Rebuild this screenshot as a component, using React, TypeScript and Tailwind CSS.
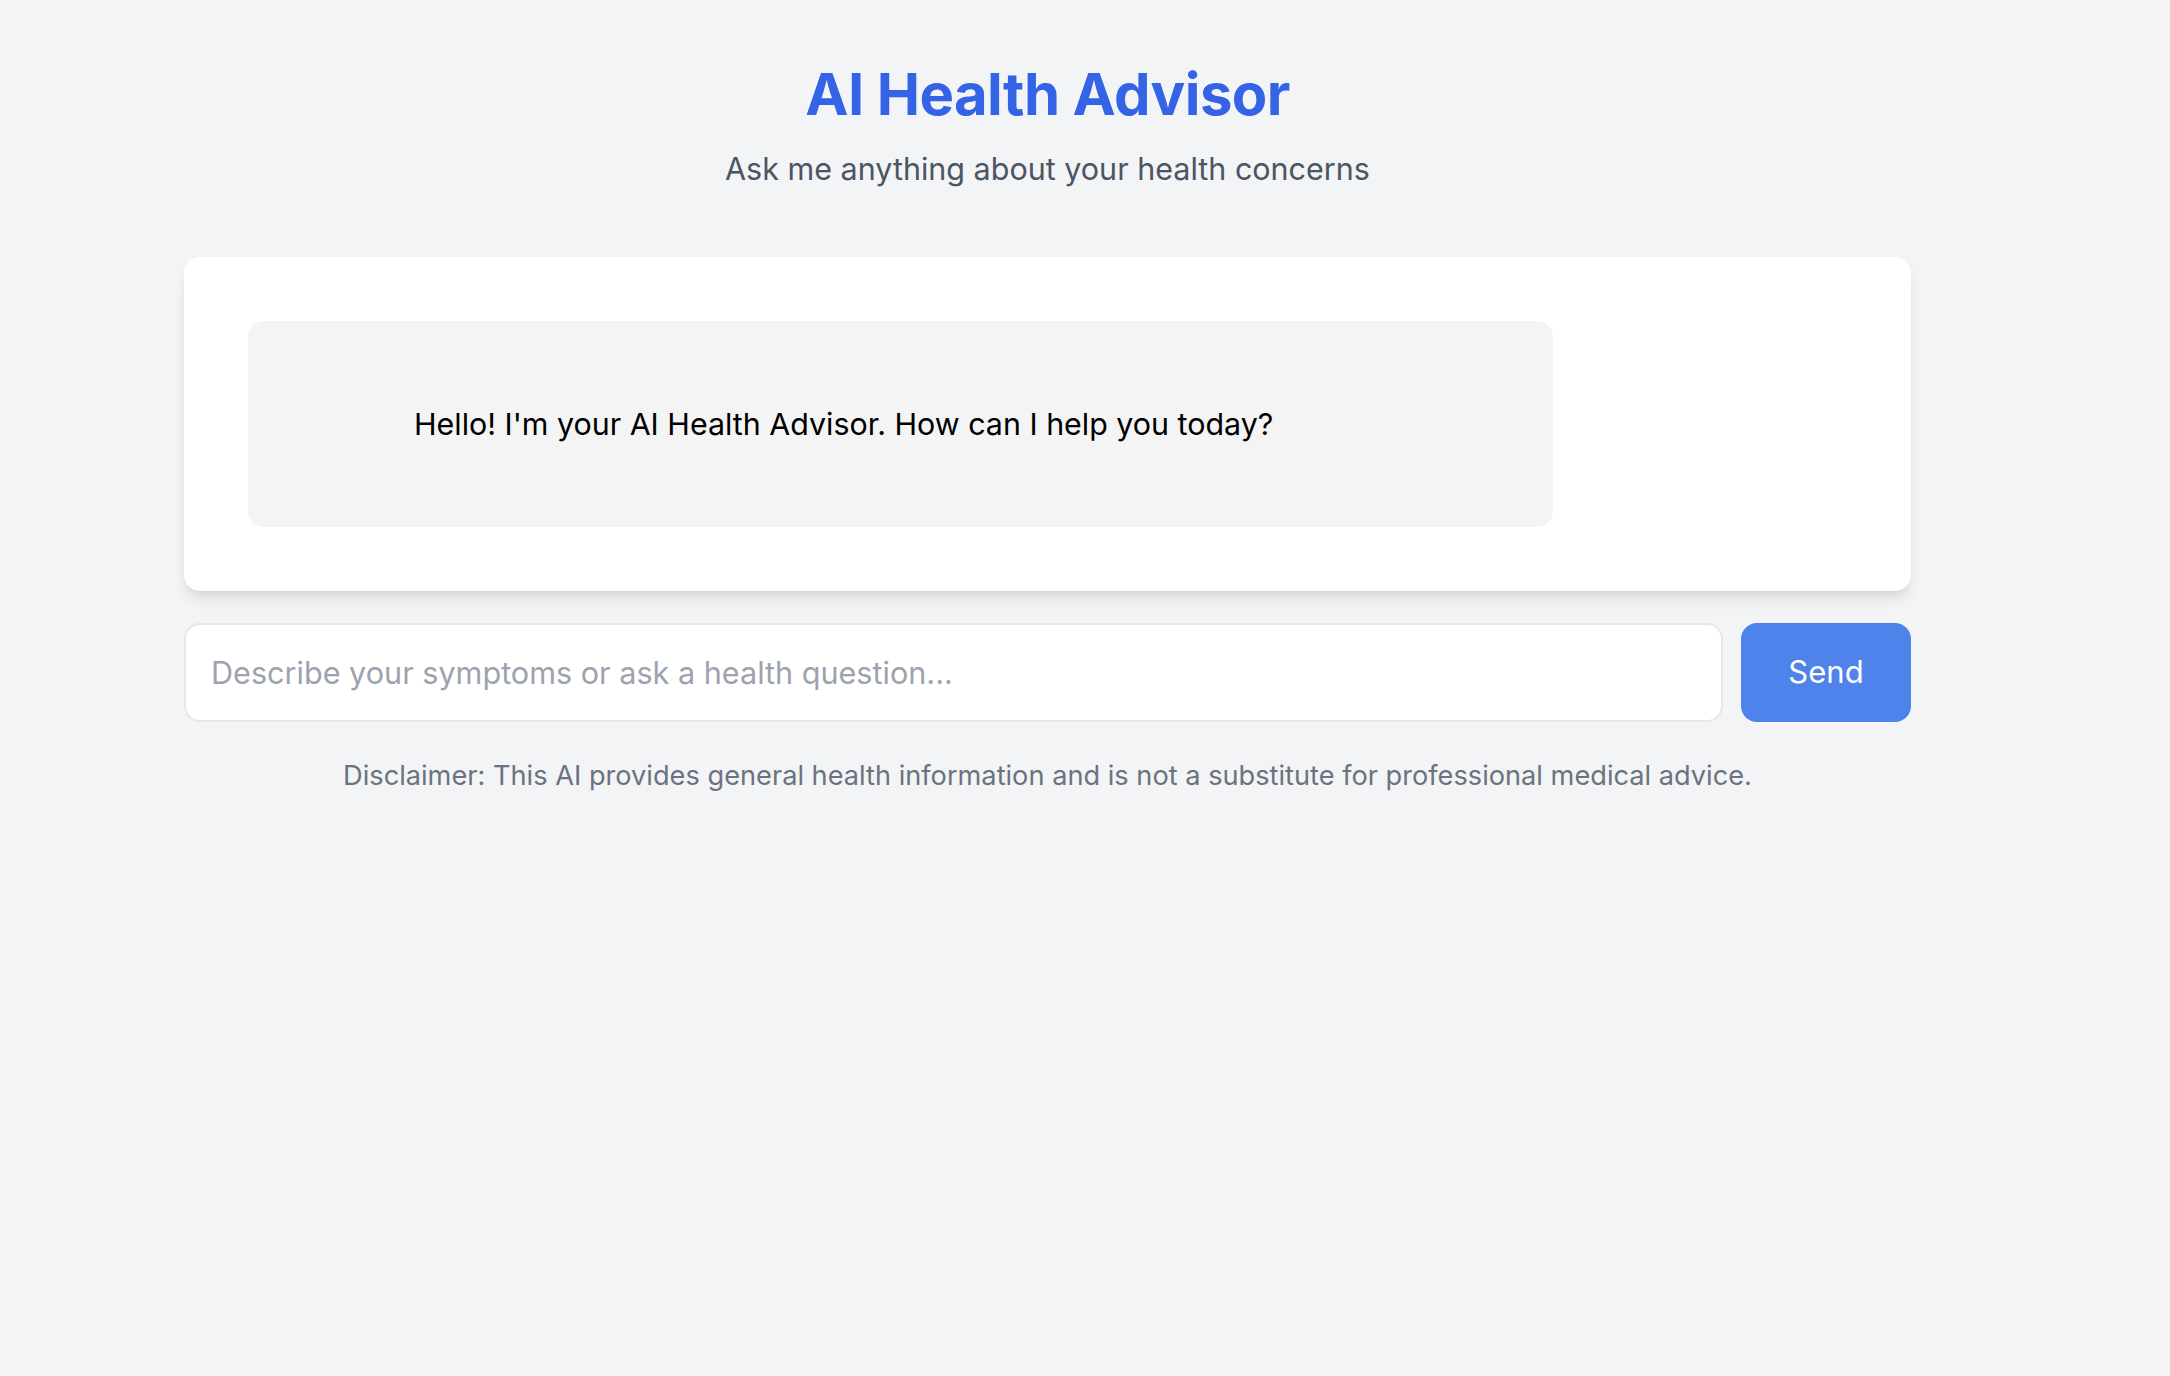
import { useState } from 'react';

interface Message {
  role: 'assistant' | 'user';
  text: string;
}

const INITIAL: Message[] = [
  { role: 'assistant', text: "Hello! I'm your AI Health Advisor. How can I help you today?" },
];

export default function App() {
  const [messages] = useState<Message[]>(INITIAL);
  const [input, setInput] = useState('');

  return (
    <div className="min-h-screen bg-[#f3f4f6] font-['Inter',sans-serif]">
      <div className="ml-[184px] w-[1727px] pt-[58px]">
        {/* Header */}
        <div className="text-center">
          <h1 className="text-[58px] leading-[72px] font-bold tracking-[-0.01em] text-[#3563e5]">
            AI Health Advisor
          </h1>
          <p className="mt-[19px] text-[30.5px] leading-[40px] text-[#4b5563]">
            Ask me anything about your health concerns
          </p>
        </div>

        {/* Chat window */}
        <div className="mt-[68px] bg-white rounded-2xl shadow-lg p-[64px]">
          {messages.map((m, i) => (
            <div
              key={i}
              className="w-[1305px] h-[206px] rounded-2xl bg-[#f4f4f4] flex items-center pl-[166px]"
            >
              <p className="text-[30.4px] leading-[40px] text-black">{m.text}</p>
            </div>
          ))}
        </div>

        {/* Input row */}
        <div className="mt-[32px] flex gap-[18px]">
          <input
            value={input}
            onChange={(e) => setInput(e.target.value)}
            placeholder="Describe your symptoms or ask a health question..."
            className="flex-1 h-[99px] rounded-2xl border-2 border-[#e5e7eb] bg-white px-[25px] text-[30.6px] text-gray-900 placeholder:text-[#9ca3af] outline-none"
          />
          <button className="w-[170px] h-[99px] rounded-2xl bg-[#4f83ec] text-white text-[31px]">
            Send
          </button>
        </div>

        {/* Disclaimer */}
        <p className="mt-[36px] text-center text-[27.2px] leading-[36px] text-[#6b7280]">
          Disclaimer: This AI provides general health information and is not a substitute for
          professional medical advice.
        </p>
      </div>
    </div>
  );
}
